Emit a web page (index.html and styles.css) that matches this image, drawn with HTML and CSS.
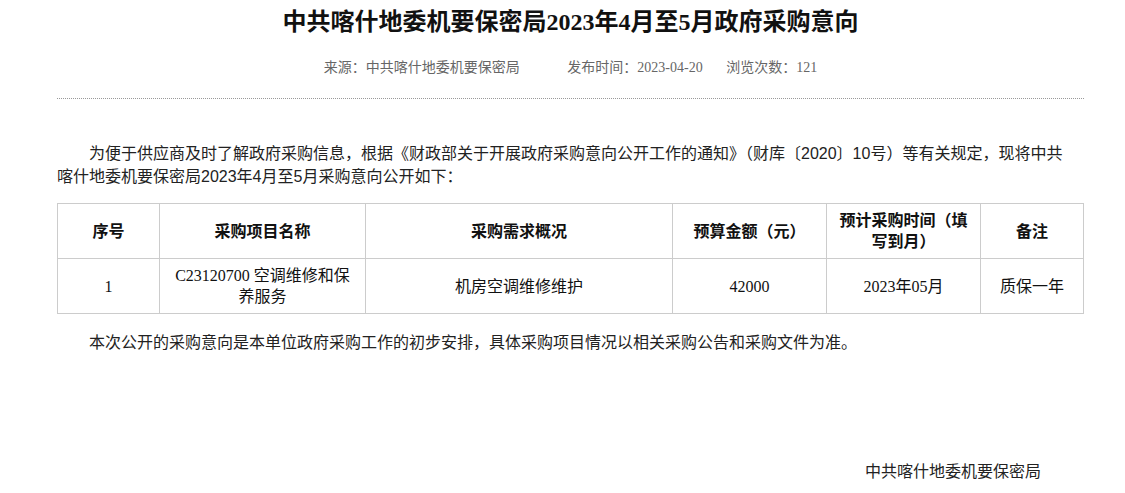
FILE: index.html
```html
<!DOCTYPE html>
<html lang="zh-CN">
<head>
    <meta charset="UTF-8">
    <meta name="viewport" content="width=device-width, initial-scale=1.0">
    <title>中共喀什地委机要保密局2023年4月至5月政府采购意向</title>
    <link rel="stylesheet" href="styles.css">
</head>
<body>
    <div class="article">
        <h1 class="title">中共喀什地委机要保密局2023年4月至5月政府采购意向</h1>
        <div class="meta">
            <span>来源：中共喀什地委机要保密局</span>
            <span class="meta-date">发布时间：2023-04-20</span>
            <span class="meta-views">浏览次数：121</span>
        </div>
        <div class="content">
            <p class="para para-first">为便于供应商及时了解政府采购信息，根据《财政部关于开展政府采购意向公开工作的通知》（财库〔2020〕10号）等有关规定，现将中共喀什地委机要保密局2023年4月至5月采购意向公开如下：</p>
            <table class="plan">
                <colgroup>
                    <col class="c-no">
                    <col class="c-name">
                    <col class="c-need">
                    <col class="c-money">
                    <col class="c-time">
                    <col class="c-note">
                </colgroup>
                <tr>
                    <th>序号</th>
                    <th>采购项目名称</th>
                    <th>采购需求概况</th>
                    <th>预算金额（元）</th>
                    <th>预计采购时间（填写到月）</th>
                    <th>备注</th>
                </tr>
                <tr>
                    <td>1</td>
                    <td>C23120700 空调维修和保养服务</td>
                    <td>机房空调维修维护</td>
                    <td>42000</td>
                    <td>2023年05月</td>
                    <td>质保一年</td>
                </tr>
            </table>
            <p class="para para-last">本次公开的采购意向是本单位政府采购工作的初步安排，具体采购项目情况以相关采购公告和采购文件为准。</p>
            <p class="sign">中共喀什地委机要保密局</p>
        </div>
    </div>
</body>
</html>
```

FILE: styles.css
```css
body {
    margin: 0;
    background: #fff;
    color: #222;
    font-family: "Liberation Sans", "Noto Sans CJK SC", sans-serif;
}
.article {
    width: 1027px;
    margin-left: 57px;
}
.title {
    margin: 0;
    padding-top: 6px;
    font-family: "Liberation Serif", "Noto Sans CJK SC", serif;
    font-size: 24px;
    line-height: 32px;
    font-weight: 700;
    color: #111;
    text-align: center;
}
.meta {
    margin-top: 20px;
    font-family: "Liberation Serif", "Noto Sans CJK SC", serif;
    font-size: 14px;
    line-height: 20px;
    color: #666;
    text-align: center;
    padding-bottom: 20px;
    border-bottom: 1px dotted #999;
}
.meta-date {
    margin-left: 44px;
}
.meta-views {
    margin-left: 20px;
}
.content {
    padding-top: 43px;
}
.para {
    margin: 0;
    font-size: 16px;
    line-height: 23px;
    text-indent: 2em;
}
.para-first {
    padding-right: 10px;
}
.plan {
    width: 100%;
    margin-top: 15px;
    border-collapse: collapse;
    table-layout: fixed;
    font-family: "Liberation Serif", "Noto Sans CJK SC", serif;
    font-size: 16px;
    line-height: 21px;
    color: #111;
}
.plan th,
.plan td {
    border: 1px solid #cccccc;
    padding: 6px 10px;
    text-align: center;
    vertical-align: middle;
}
.plan th {
    font-weight: 700;
    height: 42px;
}
.plan td {
    height: 42px;
}
.c-no { width: 102px; }
.c-name { width: 206px; }
.c-need { width: 307px; }
.c-money { width: 154px; }
.c-time { width: 154px; }
.c-note { width: 103px; }
.para-last {
    margin-top: 17px;
}
.sign {
    margin: 106px 0 0;
    padding-right: 43px;
    text-align: right;
    font-size: 16px;
    line-height: 24px;
}
```
